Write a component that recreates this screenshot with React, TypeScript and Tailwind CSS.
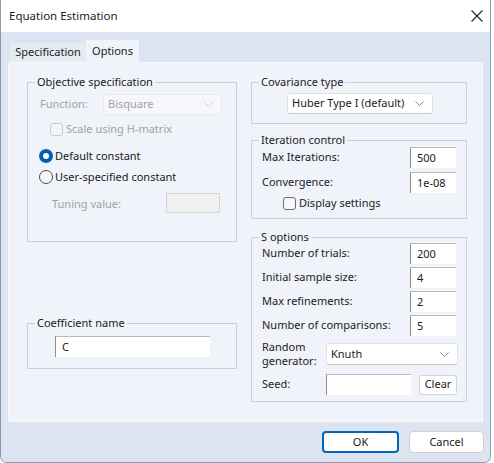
import React from 'react';

const Chevron = ({ muted }: { muted?: boolean }) => (
    <svg width="9" height="5" viewBox="0 0 9 5" className="shrink-0">
        <path d="M0.5 0.5 L4.5 4.5 L8.5 0.5" fill="none" stroke={muted ? '#c8ccd1' : '#8a8a8a'} strokeWidth="1" />
    </svg>
);

const Edit = ({ value, className }: { value?: string; className: string }) => (
    <div className={`flex items-center bg-white border-l border-t border-l-[#8c8c8c] border-t-[#b9b9b9] pl-[6px] ${className}`}>
        {value}
    </div>
);

const Combo = ({ value, className, muted }: { value: string; className: string; muted?: boolean }) => (
    <div
        className={`flex items-center justify-between whitespace-nowrap rounded-[3px] border pl-[4px] pr-[8px] ${
            muted ? 'border-[#e6e9ed] bg-[#f5f7fa] text-[#a3a3a3]' : 'border-[#e1e1e1] border-b-[#c8c8c8] bg-white'
        } ${className}`}
    >
        <span>{value}</span>
        <Chevron muted={muted} />
    </div>
);

const Group = ({ title, className, children }: { title: string; className: string; children?: React.ReactNode }) => (
    <fieldset className={`border border-[#ccd1d8] ${className}`}>
        <legend className="ml-[7px] px-[2px] leading-[14px]">{title}</legend>
        {children}
    </fieldset>
);

const Check = ({ label, muted, className }: { label: string; muted?: boolean; className: string }) => (
    <div className={`flex items-center gap-[3px] h-[14px] ${className}`}>
        <div className={`w-[13px] h-[13px] rounded-[3px] border ${muted ? 'border-[#c9ccd0] bg-[#f3f5f8]' : 'border-[#6f6f6f] bg-[#f7f8fa]'}`} />
        <span className={muted ? 'text-[#a3a3a3]' : ''}>{label}</span>
    </div>
);

const Radio = ({ label, checked, className }: { label: string; checked?: boolean; className: string }) => (
    <div className={`flex items-center gap-[2px] h-[14px] ${className}`}>
        {checked ? (
            <div className="w-[14px] h-[14px] rounded-full bg-[#005fb8] flex items-center justify-center">
                <div className="w-[6px] h-[6px] rounded-full bg-white" />
            </div>
        ) : (
            <div className="w-[14px] h-[14px] rounded-full border border-[#4a4a4a] bg-[#f6f7f9]" />
        )}
        <span>{label}</span>
    </div>
);

// une ligne "libellé + champ" des options de droite
const FieldRow = ({ label, value, className }: { label: string; value: string; className: string }) => (
    <div className={`flex items-center justify-between h-[21px] pl-[10px] pr-[10px] ${className}`}>
        <span>{label}</span>
        <Edit value={value} className="w-[46px] h-[21px]" />
    </div>
);

export default function App() {
    return (
        <div className="w-[494px] h-[463px] bg-white font-['Noto_Sans',sans-serif] text-[11px] text-[#1b1b1b]">
            <div className="w-[491px] h-[463px] flex flex-col border-x border-b border-[#8f98a5] rounded-b-[7px] overflow-hidden">
                {/* Barre de titre */}
                <div className="h-[32px] shrink-0 bg-white flex items-center justify-between pl-[8px] pr-[7px]">
                    <span className="text-[11.5px]">Equation Estimation</span>
                    <svg width="12" height="12" viewBox="0 0 12 12">
                        <path d="M0.5 0.5 L11.5 11.5 M11.5 0.5 L0.5 11.5" stroke="#222" strokeWidth="1.1" />
                    </svg>
                </div>

                <div className="flex-1 bg-[#dbe4f0] flex flex-col">
                    {/* Onglets */}
                    <div className="h-[30px] shrink-0 flex items-end pl-[9px]">
                        <div className="h-[19px] w-[76px] flex items-center justify-center bg-[#e6ebf2]">Specification</div>
                        <div className="h-[23px] w-[53px] flex items-center justify-center bg-[#f0f3f9] -mb-px relative">Options</div>
                    </div>

                    {/* Panneau Options */}
                    <div className="h-[360px] shrink-0 mx-[7px] bg-[#f0f3f9] border border-[#f7f9fc] flex pt-[12px] pl-[18px] gap-[14px]">
                        <div className="w-[210px] flex flex-col">
                            <Group title="Objective specification" className="h-[167px]">
                                <div className="flex items-center mt-[5px] pl-[12px] h-[21px]">
                                    <span className="w-[63px] text-[#a3a3a3]">Function:</span>
                                    <Combo value="Bisquare" muted className="w-[119px] h-[21px]" />
                                </div>
                                <Check label="Scale using H-matrix" muted className="mt-[7px] pl-[22px]" />
                                <Radio label="Default constant" checked className="mt-[13px] pl-[11px]" />
                                <Radio label="User-specified constant" className="mt-[7px] pl-[11px]" />
                                <div className="flex items-center mt-[9px] pl-[24px] h-[20px]">
                                    <span className="w-[114px] text-[#a3a3a3] pt-[3px]">Tuning value:</span>
                                    <div className="w-[54px] h-[20px] bg-[#f0f0f0] border border-[#d4d4d4]" />
                                </div>
                            </Group>
                            <Group title="Coefficient name" className="h-[53px] mt-[74px]">
                                <Edit value="C" className="ml-[27px] mt-[6px] w-[155px] h-[21px]" />
                            </Group>
                        </div>

                        <div className="w-[216px] flex flex-col">
                            <Group title="Covariance type" className="h-[49px]">
                                <Combo value="Huber Type I (default)" className="ml-[35px] mt-[4px] w-[146px] h-[21px]" />
                            </Group>
                            <Group title="Iteration control" className="h-[86px] mt-[9px]">
                                <FieldRow label="Max Iterations:" value="500" className="" />
                                <FieldRow label="Convergence:" value="1e-08" className="mt-[4px]" />
                                <Check label="Display settings" className="mt-[3px] pl-[31px]" />
                            </Group>
                            <Group title="S options" className="h-[172px] mt-[11px]">
                                <FieldRow label="Number of trials:" value="200" className="-mt-[1px]" />
                                <FieldRow label="Initial sample size:" value="4" className="mt-[3px]" />
                                <FieldRow label="Max refinements:" value="2" className="mt-[3px]" />
                                <FieldRow label="Number of comparisons:" value="5" className="mt-[3px]" />
                                <div className="flex items-center mt-[4px] pl-[10px] h-[28px]">
                                    <span className="w-[64px] leading-[14px]">
                                        Random
                                        <br />
                                        generator:
                                    </span>
                                    <Combo value="Knuth" className="w-[132px] h-[22px]" />
                                </div>
                                <div className="flex items-center mt-[6px] pl-[10px] h-[21px]">
                                    <span className="w-[64px]">Seed:</span>
                                    <Edit className="w-[85px] h-[21px]" />
                                    <button className="ml-[8px] w-[38px] h-[20px] bg-white border border-[#d3d3d3] rounded-[3px] flex items-center justify-center">
                                        Clear
                                    </button>
                                </div>
                            </Group>
                        </div>
                    </div>

                    {/* Boutons */}
                    <div className="flex-1 flex items-center justify-end gap-[10px] pr-[6px]">
                        <button className="w-[77px] h-[22px] bg-white border-2 border-[#0067c0] rounded-[4px] flex items-center justify-center">
                            OK
                        </button>
                        <button className="w-[75px] h-[22px] bg-white border border-[#d0d0d0] rounded-[4px] flex items-center justify-center">
                            Cancel
                        </button>
                    </div>
                </div>
            </div>
        </div>
    );
}
